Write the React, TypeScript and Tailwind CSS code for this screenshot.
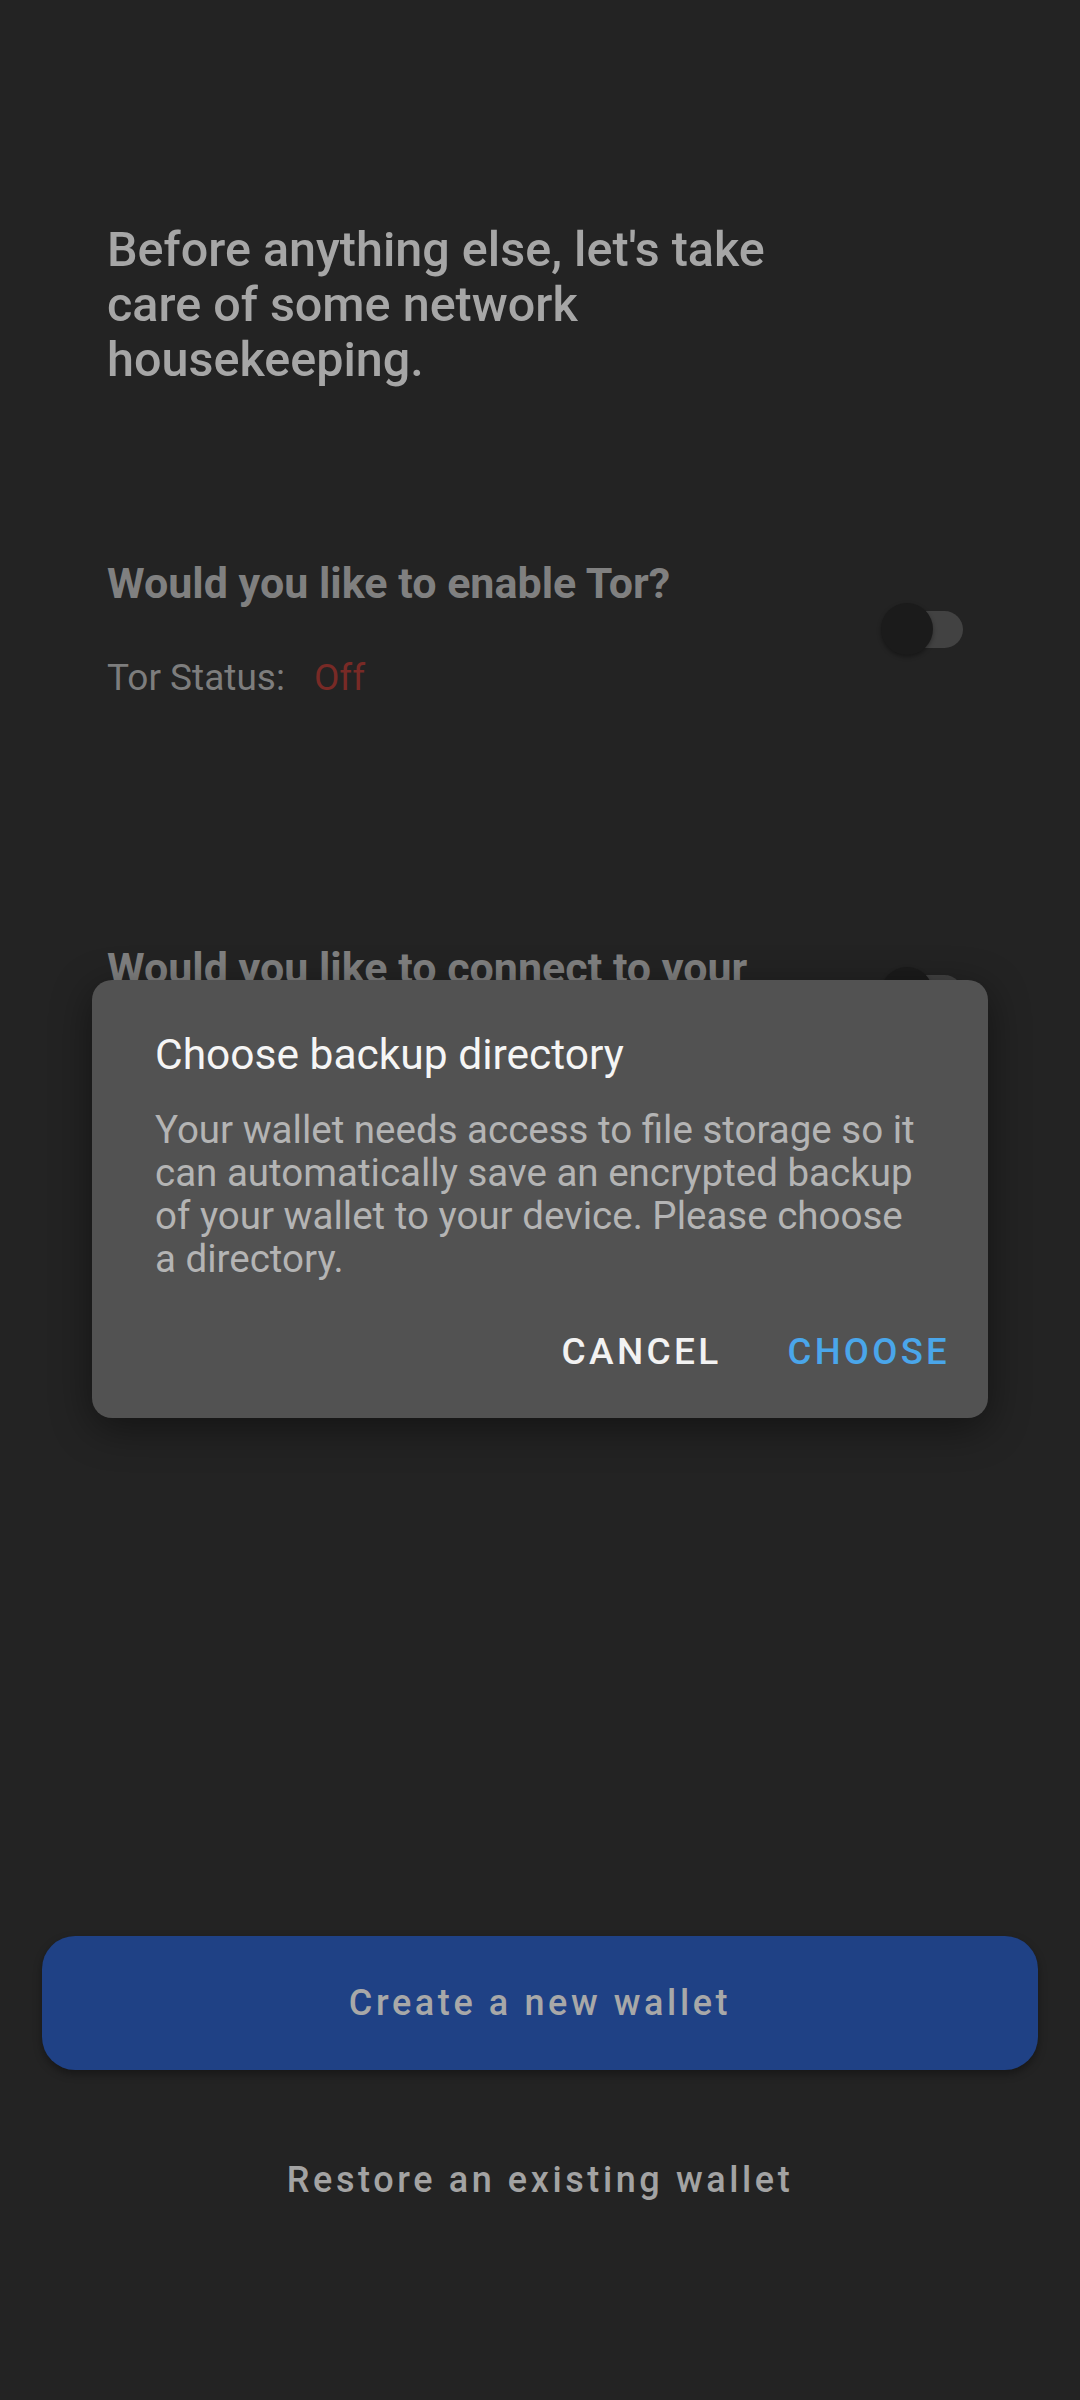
import React from "react";

function Toggle() {
  return (
    <div className="relative w-[82px] h-[52px] shrink-0">
      <div className="absolute right-0 top-[8px] w-[74px] h-[37px] rounded-full bg-[#424242]" />
      <div className="absolute left-0 top-0 w-[52px] h-[52px] rounded-full bg-[#1b1b1b] shadow-[0_2px_4px_rgba(0,0,0,0.35)]" />
    </div>
  );
}

export default function App() {
  return (
    <div className="relative w-[1080px] h-[2400px] bg-[#232323] overflow-hidden font-['Roboto',_'Noto_Sans',_sans-serif] flex flex-col">
      <div className="pl-[107px] pr-[117px] pt-[222px] flex flex-col">
        <h1 className="w-[720px] text-[48.5px] leading-[55px] font-medium text-[#a6a6a6]">
          Before anything else, let's take care of some network housekeeping.
        </h1>

        <div className="mt-[171px] flex items-center justify-between">
          <div className="flex flex-col">
            <div className="text-[43px] leading-[50px] font-bold text-[#808080]">
              Would you like to enable Tor?
            </div>
            <div className="mt-[48px] flex items-center text-[37px] leading-[44px]">
              <span className="text-[#7d7d7d]">Tor Status:</span>
              <span className="ml-[29px] text-[#782a26]">Off</span>
            </div>
          </div>
          <Toggle />
        </div>

        <div className="mt-[243px] flex items-center justify-between">
          <div className="w-[700px] text-[43px] leading-[50px] font-bold text-[#808080]">
            Would you like to connect to your own node?
          </div>
          <Toggle />
        </div>
      </div>

      <div className="flex-1" />

      <div className="px-[42px]">
        <button className="w-full h-[134px] rounded-[33px] bg-[#1f4185] shadow-[0_4px_8px_rgba(0,0,0,0.35)] text-[36px] font-medium tracking-[0.1em] text-[#a8a8a8]">
          Create a new wallet
        </button>
      </div>
      <div className="mt-[86px] mb-[196px] text-center text-[36px] leading-[48px] font-medium tracking-[0.1em] text-[#a3a3a3]">
        Restore an existing wallet
      </div>

      <div className="absolute inset-0 flex items-center justify-center">
        <div className="w-[896px] rounded-[20px] bg-[#525252] shadow-[0_10px_40px_rgba(0,0,0,0.45)] pl-[63px] pr-[38px] pt-[28px] pb-[44px] mt-[-2px]">
          <div className="text-[42.5px] leading-[52px] text-[#f5f5f5] mt-[21px]">
            Choose backup directory
          </div>
          <p className="mt-[27px] pr-[25px] text-[38.5px] leading-[43px] text-[#b4b4b4]">
            Your wallet needs access to file storage so it can automatically save an encrypted backup of your wallet to your device. Please choose a directory.
          </p>
          <div className="mt-[50px] flex justify-end items-center gap-[66px]">
            <span className="text-[37px] leading-[44px] font-medium tracking-[0.09em] text-[#f2f2f2]">CANCEL</span>
            <span className="text-[36.5px] leading-[44px] font-medium tracking-[0.09em] text-[#4aa6ea]">CHOOSE</span>
          </div>
        </div>
      </div>
    </div>
  );
}
